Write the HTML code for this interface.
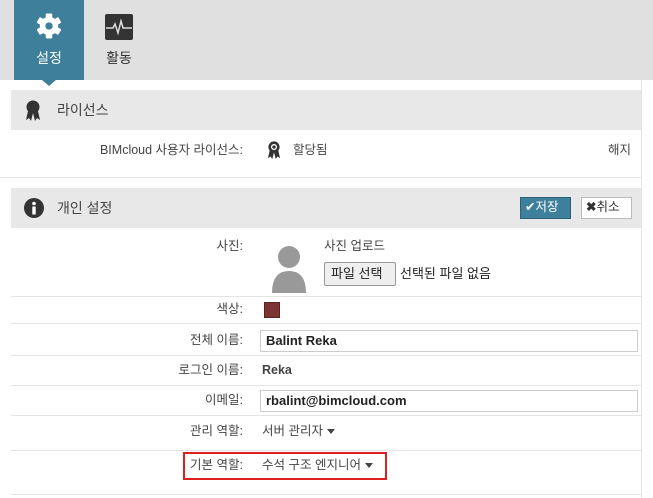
<!DOCTYPE html>
<html><head><meta charset="utf-8"><style>
*{box-sizing:border-box;margin:0;padding:0}
body{width:653px;height:498px;overflow:hidden;background:#fff;font-family:"Liberation Sans","Noto Sans CJK KR",sans-serif;font-size:13px;line-height:16px;color:#333;position:relative}
.top{position:absolute;left:0;top:0;width:653px;height:80px;background:#e0e0e0}
.tab{position:absolute;top:0;width:70px;height:80px;text-align:center;font-size:14px}
.tab.act{left:14px;background:#3e7f9b;color:#fff}
.tab.act:after{content:"";position:absolute;left:28px;bottom:-6px;border-left:7px solid transparent;border-right:7px solid transparent;border-top:6px solid #3e7f9b}
.tab span{position:absolute;left:0;right:0;top:50px}
.hdr{position:absolute;left:11px;width:630px;height:40px;background:#e8e8e8;font-size:14px;color:#444}
.hdr .t{position:absolute;left:46px;top:12px}
.sep{position:absolute;left:11px;width:630px;height:1px;background:#e4e4e4}
.rb{position:absolute;left:641px;top:80px;width:1px;height:418px;background:#e4e4e4}
.lbl{position:absolute;right:410px;font-size:12.5px;color:#444;white-space:nowrap}
.val{position:absolute;left:262px;font-size:12.5px;color:#444;white-space:nowrap}
.inp{position:absolute;left:260px;width:378px;height:22px;border:1px solid #ccc;font-weight:bold;font-size:13px;padding:2px 5px;color:#222}
.caret{display:inline-block;border-left:4px solid transparent;border-right:4px solid transparent;border-top:5px solid #444;vertical-align:middle;margin-left:4px}
.btn{position:absolute;top:9px;width:51px;height:22px;font-size:12.5px;line-height:18px;padding-left:4px;white-space:nowrap}
</style></head><body>
<div class="top">
 <div class="tab act">
  <svg style="position:absolute;left:22px;top:13px" width="26" height="26" viewBox="0 0 24 24"><g fill="#fff"><circle cx="12" cy="12" r="8.5"/><rect x="9" y="0.5" width="6" height="23" rx="1"/><rect x="9" y="0.5" width="6" height="23" rx="1" transform="rotate(60 12 12)"/><rect x="9" y="0.5" width="6" height="23" rx="1" transform="rotate(120 12 12)"/></g><circle cx="12" cy="12" r="3.4" fill="#3e7f9b"/></svg>
  <span>설정</span></div>
 <div class="tab" style="left:84px;color:#333">
  <svg style="position:absolute;left:21px;top:14px" width="28" height="26" viewBox="0 0 28 26"><rect width="28" height="26" rx="2" fill="#333"/><path d="M1 14h7l2-4 3 9 3-12 2 7h9" stroke="#ddd" stroke-width="1.5" fill="none"/></svg>
  <span>활동</span></div>
</div>
<div class="rb"></div>
<div class="hdr" style="top:90px">
 <svg style="position:absolute;left:14px;top:10px" width="16" height="22" viewBox="0 0 16 22"><circle cx="8" cy="7" r="6.5" fill="#333"/><path d="M3 11 L1 20 L4 18 L6 21 L8 13 L10 21 L12 18 L15 20 L13 11Z" fill="#333"/></svg>
 <div class="t">라이선스</div></div>
<div class="lbl" style="top:142px">BIMcloud 사용자 라이선스:</div>
<svg style="position:absolute;left:267px;top:141px" width="14" height="19" viewBox="0 0 16 22"><circle cx="8" cy="7" r="6.5" fill="#333"/><circle cx="8" cy="7" r="3.5" fill="#fff"/><circle cx="8" cy="7" r="2" fill="#333"/><path d="M3 11 L1 20 L4 18 L6 21 L8 13 L10 21 L12 18 L15 20 L13 11Z" fill="#333"/></svg>
<div class="val" style="left:293px;top:142px">할당됨</div>
<div class="val" style="left:608px;top:142px">해지</div>
<div class="sep" style="top:177px;left:0;width:641px"></div>
<div class="hdr" style="top:188px">
 <svg style="position:absolute;left:13px;top:10px" width="20" height="20" viewBox="0 0 20 20"><circle cx="10" cy="10" r="10" fill="#333"/><circle cx="10" cy="5.5" r="1.8" fill="#fff"/><rect x="8.3" y="8.5" width="3.4" height="8" fill="#fff"/></svg>
 <div class="t">개인 설정</div>
 <div class="btn" style="left:509px;background:#3e7f9b;border:1px solid #2a6078;color:#fff">✔저장</div>
 <div class="btn" style="left:570px;background:#fff;border:1px solid #bbb;color:#333"><b>✖</b>취소</div>
</div>
<div class="lbl" style="top:238px">사진:</div>
<svg style="position:absolute;left:271px;top:244px" width="36" height="50" viewBox="0 0 36 50"><circle cx="18" cy="13" r="11" fill="#999"/><path d="M1 49 Q1 27 18 27 Q35 27 35 49Z" fill="#999"/></svg>
<div class="val" style="left:324px;top:238px">사진 업로드</div>
<div style="position:absolute;left:324px;top:262px;width:72px;height:24px;border:1px solid #999;border-radius:2px;background:#efefef;font-size:13px;padding:3px 0 0 6px;color:#222">파일 선택</div>
<div class="val" style="left:400px;top:266px;font-size:13px;color:#222">선택된 파일 없음</div>
<div class="sep" style="top:296px"></div>
<div class="lbl" style="top:301px">색상:</div>
<div style="position:absolute;left:264px;top:302px;width:16px;height:16px;background:#7b3535;border:1px solid #5a2020"></div>
<div class="sep" style="top:323px"></div>
<div class="lbl" style="top:332px">전체 이름:</div>
<div class="inp" style="top:330px">Balint Reka</div>
<div class="sep" style="top:355px"></div>
<div class="lbl" style="top:362px">로그인 이름:</div>
<div class="val" style="top:362px;font-weight:bold">Reka</div>
<div class="sep" style="top:385px"></div>
<div class="lbl" style="top:392px">이메일:</div>
<div class="inp" style="top:390px">rbalint@bimcloud.com</div>
<div class="sep" style="top:415px"></div>
<div class="lbl" style="top:423px">관리 역할:</div>
<div class="val" style="top:423px">서버 관리자<span class="caret"></span></div>
<div class="sep" style="top:450px"></div>
<div style="position:absolute;left:183px;top:452px;width:204px;height:28px;border:2px solid #e0201e"></div>
<div class="lbl" style="top:457px">기본 역할:</div>
<div class="val" style="top:457px">수석 구조 엔지니어<span class="caret"></span></div>
<div class="sep" style="top:494px"></div>
</body></html>
